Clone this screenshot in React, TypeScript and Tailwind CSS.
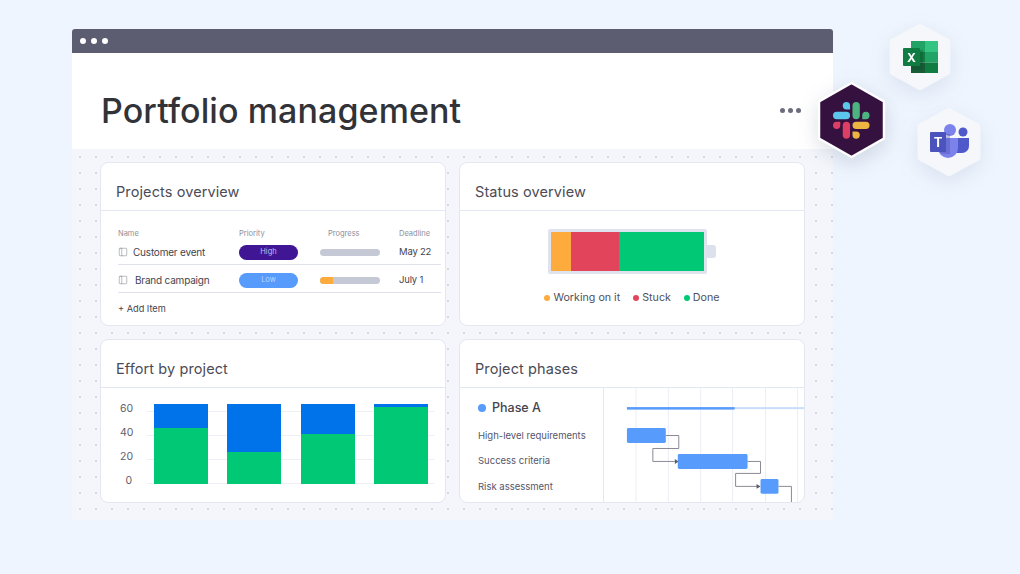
import { PanelLeft } from 'lucide-react';

const font = "font-['Inter','Liberation_Sans',sans-serif]";

const cardClass = 'overflow-hidden rounded-lg border border-[#e3e7f2] bg-white';

const rows = [
  { name: 'Customer event', nameClass: 'ml-[5px]', priority: 'High', pill: 'bg-[#401694] text-[#c9bce6]', done: 0, date: 'May 22', rowClass: 'h-[25px]' },
  { name: 'Brand campaign', nameClass: 'ml-[7px]', priority: 'Low', pill: 'bg-[#579bfc] text-[#b9d6fe]', done: 13, date: 'July 1', rowClass: 'h-[28px] pt-[3px]' },
];

const efforts = [
  { blue: 24, green: 56 },
  { blue: 48, green: 32 },
  { blue: 30, green: 50 },
  { blue: 3, green: 77 },
];

const legend = [
  { label: 'Working on it', color: 'bg-[#fdab3d]' },
  { label: 'Stuck', color: 'bg-[#e2445c]' },
  { label: 'Done', color: 'bg-[#00c875]' },
];

function CardHeader({ title }: { title: string }) {
  return (
    <div className="flex h-[48px] items-center border-b border-[#e3e7f2] pl-[15px] pt-[11px] text-[14.5px] tracking-[0.1px] text-[#4b4b57]">
      {title}
    </div>
  );
}

function ProjectsCard() {
  return (
    <div className={cardClass}>
      <CardHeader title="Projects overview" />
      <div className="pl-[17px] pr-[4px]">
        <div className="grid h-[29px] grid-cols-[121px_89px_71px_1fr] items-end text-[7.5px] text-[#8d8f9c]">
          <span className="pb-[1px]">Name</span>
          <span className="pb-[1px]">Priority</span>
          <span className="pb-[1px]">Progress</span>
          <span className="pb-[1px]">Deadline</span>
        </div>
        {rows.map((row) => (
          <div
            key={row.name}
            className={`grid grid-cols-[121px_81px_79px_1fr] items-center border-b border-[#dfe2ea] text-[10px] tracking-[-0.2px] text-[#44444f] ${row.rowClass}`}
          >
            <span className="flex items-center">
              <PanelLeft size={10} strokeWidth={1.2} className="text-[#777985]" />
              <span className={row.nameClass}>{row.name}</span>
            </span>
            <span className={`flex h-[15px] w-[59px] items-center justify-center rounded-full text-[7.5px] tracking-normal ${row.pill}`}>
              {row.priority}
            </span>
            <span className="h-[7px] w-[60px] overflow-hidden rounded-full bg-[#c5c9d6]">
              <span className="block h-full bg-[#fdab3d]" style={{ width: row.done }} />
            </span>
            <span className="text-[9.5px]">{row.date}</span>
          </div>
        ))}
        <div className="flex h-[32px] items-center text-[9.2px] text-[#44444f]">+ Add Item</div>
      </div>
    </div>
  );
}

function StatusCard() {
  return (
    <div className={cardClass}>
      <CardHeader title="Status overview" />
      <div className="flex flex-col items-center pt-[18px]">
        <div className="flex items-center">
          <div className="flex h-[45px] w-[159px] rounded-[2px] border-[3px] border-[#dfe3ee]">
            <div className="w-[20px] bg-[#fdab3d]" />
            <div className="w-[48px] bg-[#e2445c]" />
            <div className="flex-1 bg-[#00c875]" />
          </div>
          <div className="h-[13px] w-[9px] rounded-r-[3px] bg-[#dde1ee]" />
        </div>
        <div className="mt-[16px] flex items-center gap-[13px] text-[10.7px] leading-[16px] text-[#4f4f5c]">
          {legend.map((item) => (
            <span key={item.label} className="flex items-center gap-[3px]">
              <span className={`h-[6px] w-[6px] rounded-full ${item.color}`} />
              {item.label}
            </span>
          ))}
        </div>
      </div>
    </div>
  );
}

function EffortCard() {
  return (
    <div className={cardClass}>
      <CardHeader title="Effort by project" />
      <div className="flex pl-[19px] pt-[16px]">
        <div className="flex h-[88px] w-[27px] flex-col text-[10.5px] leading-[24px] text-[#5f606c]">
          <span className="-mt-[7px] h-[24px] w-[12px] text-right">60</span>
          <span className="h-[24px] w-[12px] text-right">40</span>
          <span className="h-[24px] w-[12px] text-right">20</span>
          <span className="h-[24px] w-[12px] text-right">0</span>
        </div>
        <div className="flex h-[80px] w-[287px] gap-[19.3px] bg-[linear-gradient(#eef0f6_1px,transparent_1px)] bg-[size:100%_24px] bg-[position:0_7px] pl-[7px]">
          {efforts.map((bar, i) => (
            <div key={i} className="flex w-[54px] flex-col">
              <div className="bg-[#0073ea]" style={{ height: bar.blue }} />
              <div className="bg-[#00c875]" style={{ height: bar.green }} />
            </div>
          ))}
        </div>
      </div>
    </div>
  );
}

function GanttChart() {
  return (
    <svg viewBox="0 0 201 115" className="h-[115px] w-[201px]" fill="none">
      {[32, 64.5, 97, 129, 162, 194].map((x) => (
        <line key={x} x1={x} y1="0" x2={x} y2="115" stroke="#eceef5" />
      ))}
      <rect x="23" y="19" width="178" height="2" fill="#c9dcfb" />
      <rect x="23" y="19" width="108" height="2.5" fill="#579bfc" />
      <path d="M62 47.500H75V60.500H49V73.500H71" stroke="#8a8b96" />
      <path d="M71 71 75 73.500 71 76Z" fill="#5c5d68" />
      <path d="M144 73.500H157V85.500H132V98.500H154" stroke="#8a8b96" />
      <path d="M153 96 157 98.500 153 101Z" fill="#5c5d68" />
      <path d="M175 98.500H188V115" stroke="#8a8b96" />
      <rect x="23" y="40" width="39" height="15" rx="1.500" fill="#579bfc" />
      <rect x="74" y="66" width="70" height="15" rx="1.500" fill="#579bfc" />
      <rect x="157" y="91" width="18" height="15" rx="1.500" fill="#579bfc" />
    </svg>
  );
}

function PhasesCard() {
  return (
    <div className={cardClass}>
      <CardHeader title="Project phases" />
      <div className="flex">
        <div className="w-[144px] border-r border-[#e3e7f2] pl-[18px] text-[9.5px] text-[#55566a]">
          <div className="flex h-[35px] items-center gap-[6px] pt-[5px] text-[12.5px] font-medium text-[#44444f]">
            <span className="h-[8px] w-[8px] rounded-full bg-[#579bfc]" />
            Phase A
          </div>
          <div className="flex h-[25.500px] items-center">High-level requirements</div>
          <div className="flex h-[25.500px] items-center">Success criteria</div>
          <div className="flex h-[25.500px] items-center">Risk assessment</div>
        </div>
        <GanttChart />
      </div>
    </div>
  );
}

function SlackBadge() {
  return (
    <svg viewBox="0 0 75 84" className="absolute left-[814px] top-[78px] h-[84px] w-[75px] drop-shadow-[0_6px_10px_rgba(60,70,110,0.18)]">
      <polygon points="37.5,5 70,23.500 70,60.500 37.5,79 5,60.500 5,23.500" fill="#35113f" stroke="#ffffff" strokeWidth="2.5" strokeLinejoin="round" />
      <g transform="translate(19 24) scale(0.68)">
        <path d="M19.712.133a5.381 5.381 0 0 0-5.376 5.387 5.381 5.381 0 0 0 5.376 5.386h5.376V5.52A5.381 5.381 0 0 0 19.712.133m0 14.365H5.376A5.381 5.381 0 0 0 0 19.884a5.381 5.381 0 0 0 5.376 5.387h14.336a5.381 5.381 0 0 0 5.376-5.387 5.381 5.381 0 0 0-5.376-5.386" fill="#5cc6ec" />
        <path d="M53.76 19.884a5.381 5.381 0 0 0-5.376-5.386 5.381 5.381 0 0 0-5.376 5.386v5.387h5.376a5.381 5.381 0 0 0 5.376-5.387m-14.336 0V5.52A5.381 5.381 0 0 0 34.048.133a5.381 5.381 0 0 0-5.376 5.387v14.364a5.381 5.381 0 0 0 5.376 5.387 5.381 5.381 0 0 0 5.376-5.387" fill="#4cb57f" />
        <path d="M34.048 54a5.381 5.381 0 0 0 5.376-5.387 5.381 5.381 0 0 0-5.376-5.386h-5.376v5.386A5.381 5.381 0 0 0 34.048 54m0-14.365h14.336a5.381 5.381 0 0 0 5.376-5.386 5.381 5.381 0 0 0-5.376-5.387H34.048a5.381 5.381 0 0 0-5.376 5.387 5.381 5.381 0 0 0 5.376 5.386" fill="#ecb440" />
        <path d="M0 34.249a5.381 5.381 0 0 0 5.376 5.386 5.381 5.381 0 0 0 5.376-5.386v-5.387H5.376A5.381 5.381 0 0 0 0 34.25m14.336-.001v14.364A5.381 5.381 0 0 0 19.712 54a5.381 5.381 0 0 0 5.376-5.387V34.25a5.381 5.381 0 0 0-5.376-5.387 5.381 5.381 0 0 0-5.376 5.387" fill="#dc3f63" />
      </g>
    </svg>
  );
}

function ExcelBadge() {
  return (
    <svg viewBox="0 0 80 90" className="absolute left-[880px] top-[14px] h-[90px] w-[80px] drop-shadow-[0_6px_10px_rgba(80,100,150,0.12)]">
      <polygon points="40,13 67.5,28 67.5,58 40,73 12.5,58 12.5,28" fill="#f5f7fb" stroke="#f5f7fb" strokeWidth="6" strokeLinejoin="round" />
      <rect x="31" y="27" width="14" height="11" fill="#21a366" />
      <rect x="45" y="27" width="13" height="11" fill="#33c481" />
      <rect x="31" y="38" width="14" height="10.500" fill="#107c41" />
      <rect x="45" y="38" width="13" height="10.500" fill="#21a366" />
      <rect x="31" y="48.500" width="14" height="10.500" fill="#185c37" />
      <rect x="45" y="48.500" width="13" height="10.500" fill="#107c41" />
      <rect x="31" y="36" width="12" height="20" fill="#0c4f2b" opacity="0.35" />
      <rect x="23" y="34" width="17" height="18" rx="1" fill="#107c41" />
      <text x="31.5" y="47.500" textAnchor="middle" fontSize="12" fontWeight="700" fill="#ffffff" fontFamily="Inter, sans-serif">X</text>
    </svg>
  );
}

function TeamsBadge() {
  return (
    <svg viewBox="0 0 84 88" className="absolute left-[908px] top-[98px] h-[88px] w-[84px] drop-shadow-[0_6px_10px_rgba(80,100,150,0.12)]">
      <polygon points="41,13 69.5,28.500 69.5,59.500 41,75 12.5,59.500 12.5,28.500" fill="#f5f7fb" stroke="#f5f7fb" strokeWidth="6" strokeLinejoin="round" />
      <circle cx="55" cy="34" r="4.500" fill="#5059c9" />
      <path d="M44 40H61V48A7 7 0 0 1 54 55H44Z" fill="#5059c9" />
      <circle cx="42" cy="32" r="6" fill="#7b83eb" />
      <path d="M30 40H50V50A10 10 0 0 1 30 50Z" fill="#7b83eb" />
      <path d="M30 36H42V56H36A6 6 0 0 1 30 50Z" fill="#3b3f9a" opacity="0.3" />
      <rect x="22" y="34" width="16" height="20" rx="1" fill="#4b53bc" />
      <text x="30" y="49" textAnchor="middle" fontSize="13" fontWeight="700" fill="#ffffff" fontFamily="Inter, sans-serif">T</text>
    </svg>
  );
}

export default function App() {
  return (
    <div className={`relative h-[574px] w-[1020px] overflow-hidden bg-[#eef5fe] pl-[72px] pt-[29px] ${font}`}>
      <div className="w-[761px]">
        <div className="flex h-[24px] items-center gap-[5px] rounded-t-[3px] bg-[#5c5d71] pl-[8px]">
          <span className="h-[6px] w-[6px] rounded-full bg-white" />
          <span className="h-[6px] w-[6px] rounded-full bg-white" />
          <span className="h-[6px] w-[6px] rounded-full bg-white" />
        </div>
        <div className="flex h-[96px] items-center justify-between bg-white pl-[29px] pr-[32px] pt-[19px]">
          <h1 className="text-[34px] font-medium tracking-[0.1px] text-[#323338]">Portfolio management</h1>
          <div className="flex gap-[3px]">
            <span className="h-[5px] w-[5px] rounded-full bg-[#6b6c7d]" />
            <span className="h-[5px] w-[5px] rounded-full bg-[#6b6c7d]" />
            <span className="h-[5px] w-[5px] rounded-full bg-[#6b6c7d]" />
          </div>
        </div>
        <div className="grid h-[371px] grid-cols-[346px_346px] grid-rows-[164px_164px] gap-x-[13px] gap-y-[13px] bg-[#f4f6fb] bg-[radial-gradient(circle,#d5d8e3_1px,transparent_1px)] bg-[size:16px_16px] pl-[28px] pt-[13px]">
          <ProjectsCard />
          <StatusCard />
          <EffortCard />
          <PhasesCard />
        </div>
      </div>
      <ExcelBadge />
      <TeamsBadge />
      <SlackBadge />
    </div>
  );
}
